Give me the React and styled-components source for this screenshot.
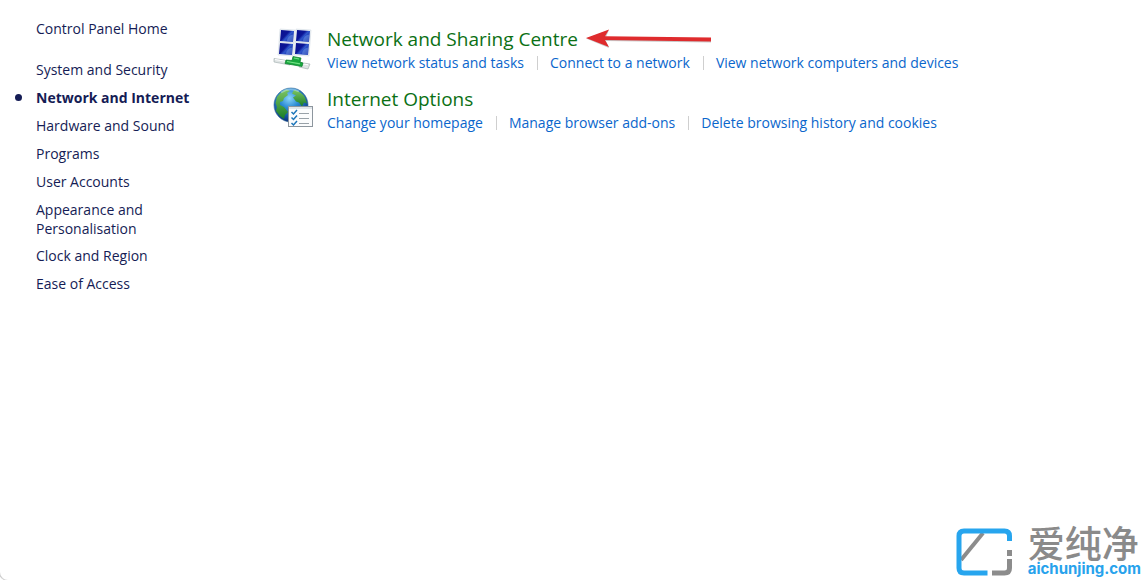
import React from "react";
import styled, { createGlobalStyle } from "styled-components";

const GlobalStyle = createGlobalStyle`
  * { box-sizing: border-box; }
  body {
    margin: 0;
    background: #fff;
    font-family: "Segoe UI", "Open Sans", "Noto Sans", sans-serif;
    font-size: 14px;
    line-height: 20px;
    color: #151c55;
  }
`;

const Page = styled.div`
  position: relative;
  display: flex;
  align-items: flex-start;
  min-height: 100vh;
  overflow: hidden;
`;

const Sidebar = styled.nav`
  flex: none;
  width: 272px;
  padding: 19px 72px 24px 36px;
`;

const NavList = styled.ul`
  list-style: none;
  margin: 21px 0 0;
  padding: 0;
  display: flex;
  flex-direction: column;
  gap: 8px;
`;

const NavItem = styled.li`
  position: relative;
  line-height: ${(p) => (p.$wraps ? "19px" : "20px")};
`;

const Bullet = styled.span`
  position: absolute;
  left: -21px;
  top: 6px;
  width: 7px;
  height: 7px;
  border-radius: 50%;
  background: #151c55;
`;

const NavLink = styled.a`
  display: block;
  color: inherit;
  text-decoration: none;
  font-weight: ${(p) => (p.$current ? 700 : 400)};
  &:hover { text-decoration: underline; }
`;

const Main = styled.main`
  flex: 1;
  min-width: 0;
  padding: 26px 16px 24px 0;
  display: flex;
  flex-direction: column;
  gap: 12px;
`;

const Category = styled.section`
  display: flex;
  gap: 13px;
`;

const IconBox = styled.div`
  flex: none;
  width: 42px;
  height: 46px;
  svg { display: block; }
`;

const TitleRow = styled.div`
  display: flex;
  align-items: center;
  gap: 8px;
  height: 26px;
`;

const Title = styled.h2`
  margin: 0;
  font-size: 19px;
  line-height: 26px;
  font-weight: 400;
  a { color: #0b7014; text-decoration: none; }
`;

const Tasks = styled.ul`
  list-style: none;
  margin: 0;
  padding: 0;
  display: flex;
  flex-wrap: wrap;
  min-height: 22px;
`;

const Task = styled.li`
  display: flex;
  align-items: center;
  white-space: nowrap;
  & + &::before {
    content: "";
    width: 1px;
    height: 14px;
    margin: 0 12px 0 13px;
    background: #cfcfcf;
  }
  a { color: #0a66cc; text-decoration: none; }
  a:hover { text-decoration: underline; }
`;

const Corner = styled.div`
  position: absolute;
  left: -1px;
  bottom: -1px;
  width: 9px;
  height: 9px;
  border: 1px solid #cfcfcf;
  border-width: 0 0 1px 1px;
  border-bottom-left-radius: 9px;
`;

const Watermark = styled.div`
  position: absolute;
  right: 3px;
  bottom: 4px;
  display: flex;
  align-items: flex-end;
  gap: 15px;
`;

const Brand = styled.div`
  display: flex;
  flex-direction: column;
  gap: 2px;
`;

const BrandName = styled.span`
  font: 500 37px/36px "Noto Sans CJK SC", sans-serif;
  color: #8a8a8a;
`;

const BrandUrl = styled.span`
  font: 700 15px/14px Inter, sans-serif;
  color: #27a2ec;
`;

const screens = [[8, 3], [24, 3], [7, 16], [23, 16]];

function NetworkIcon() {
  return (
    <svg width="42" height="46" viewBox="0 0 42 46" aria-hidden="true">
      <defs>
        <linearGradient id="screen" x1="0" y1="0" x2="1" y2=".8">
          <stop offset="0" stopColor="#0a1190" />
          <stop offset="0.45" stopColor="#0b1596" />
          <stop offset="0.6" stopColor="#2f57cc" />
          <stop offset="1" stopColor="#0e1c9a" />
        </linearGradient>
      </defs>
      {screens.map(([x, y]) => (
        <g key={`${x}-${y}`}>
          <path d={`M${x} ${y}l15 1-1 13-15-1z`} fill="#eef2f6" stroke="#cdd6df" strokeWidth=".5" />
          <path d={`M${x + 1} ${y + 1}l13 1-1 11-13-1z`} fill="url(#screen)" />
          <path d={`M${x + 7} ${y + 12.4}q0-6 6.500-7l-.6 7.500z`} fill="#7ba6ee" opacity=".45" />
        </g>
      ))}
      <path d="M2 32.500l16 2.500v4L2 36z" fill="#dfe4e4" stroke="#9caaaa" strokeWidth=".6" />
      <path d="M28 36.500l10 1.500-2 5-9-2z" fill="#dfe4e4" stroke="#9caaaa" strokeWidth=".6" />
      <path d="M3 33.500l14 2.300M29 37.700l7 1" stroke="#fff" />
      <path d="M14 34l6 .5 1-4 8 1.500-1 4 3 1-1 3.500-17-3z" fill="#18a83e" stroke="#0a7c29" strokeWidth=".7" />
      <path d="M15 35.500l13 2.300M22 32l5 1" stroke="#72e184" strokeWidth="1.200" />
    </svg>
  );
}

function InternetIcon() {
  return (
    <svg width="42" height="46" viewBox="0 0 42 46" aria-hidden="true">
      <defs>
        <radialGradient id="sea" cx=".45" cy=".3" r=".72">
          <stop offset="0" stopColor="#8bd6fa" />
          <stop offset=".4" stopColor="#2b8ad4" />
          <stop offset="1" stopColor="#082a78" />
        </radialGradient>
        <linearGradient id="land" x1="0" y1="0" x2="0" y2="1">
          <stop offset="0" stopColor="#7cc563" />
          <stop offset="1" stopColor="#187c26" />
        </linearGradient>
      </defs>
      <circle cx="19" cy="19" r="17" fill="url(#sea)" stroke="#326993" strokeWidth=".6" />
      <path d="M5 11q4-6 10-7.500l3 1.500-3 2 1 2-4 3-1 3-3 1 0 3 4 2 4 5-3 3-1 4q-5-3-8-8l1-4-1.500-4z" fill="url(#land)" />
      <path d="M22 4q7 1 11 7.500l2 6-3-1-2 4-3-4-3-1-3-4 3-2-4-2z" fill="url(#land)" />
      <path d="M9 6.500q9-6 18-1" fill="none" stroke="#e6faff" strokeWidth="2" opacity=".4" />
      <rect x="16.500" y="20.500" width="24" height="20" fill="#fbfcfd" stroke="#8d969e" />
      <path d="M17 22h23" stroke="#e1e6ea" strokeWidth="2" />
      <path d="M19.500 26l2 2 3.500-4M19.500 31.500l2 2 3.500-4M19.500 37l2 2 3.500-4" fill="none" stroke="#1d76ba" strokeWidth="1.500" />
      <path d="M27 27.500h10M27 32.500h10M27 37.500h10" stroke="#98a1a8" />
    </svg>
  );
}

function Arrow() {
  return (
    <svg width="125" height="20" viewBox="0 0 125 20" aria-hidden="true">
      <path d="M0 9.500L23 1l-3 7 105 1.500v4L20 12l3 7z" fill="#777" opacity=".4" />
      <path d="M0 9L23 0.500l-4 6.700 106 1.300v4L19 11l4 7z" fill="#df2b2d" />
    </svg>
  );
}

function BrandMark() {
  return (
    <svg width="57" height="48" viewBox="0 0 57 48" aria-hidden="true">
      <path d="M5 32L27 5" stroke="#8c8c8c" strokeWidth="4" />
      <path d="M53.500 13V8q0-5-5-5H8Q3 3 3 8v32q0 5 5 5h23.500" fill="none" stroke="#27a5ee" strokeWidth="5" />
      <path d="M53.500 22v6M53.500 31v9q0 5-5 5H36" fill="none" stroke="#8c8c8c" strokeWidth="5" />
    </svg>
  );
}

const navItems = [
  { label: "System and Security" },
  { label: "Network and Internet", current: true },
  { label: "Hardware and Sound" },
  { label: "Programs" },
  { label: "User Accounts" },
  { label: "Appearance and Personalisation", wraps: true },
  { label: "Clock and Region" },
  { label: "Ease of Access" },
];

const categories = [
  {
    title: "Network and Sharing Centre",
    icon: <NetworkIcon />,
    marked: true,
    tasks: ["View network status and tasks", "Connect to a network", "View network computers and devices"],
  },
  {
    title: "Internet Options",
    icon: <InternetIcon />,
    tasks: ["Change your homepage", "Manage browser add-ons", "Delete browsing history and cookies"],
  },
];

export default function App() {
  return (
    <>
      <GlobalStyle />
      <Page>
        <Sidebar>
          <NavLink href="#home">Control Panel Home</NavLink>
          <NavList>
            {navItems.map(({ label, current, wraps }) => (
              <NavItem key={label} $wraps={wraps}>
                {current && <Bullet />}
                <NavLink href="#category" $current={current} aria-current={current ? "page" : undefined}>
                  {label}
                </NavLink>
              </NavItem>
            ))}
          </NavList>
        </Sidebar>
        <Main>
          {categories.map((c) => (
            <Category key={c.title}>
              <IconBox>{c.icon}</IconBox>
              <div>
                <TitleRow>
                  <Title><a href="#open">{c.title}</a></Title>
                  {c.marked && <Arrow />}
                </TitleRow>
                <Tasks>
                  {c.tasks.map((t) => (
                    <Task key={t}><a href="#task">{t}</a></Task>
                  ))}
                </Tasks>
              </div>
            </Category>
          ))}
        </Main>
        <Corner />
        <Watermark>
          <BrandMark />
          <Brand>
            <BrandName lang="zh-CN">爱纯净</BrandName>
            <BrandUrl>aichunjing.com</BrandUrl>
          </Brand>
        </Watermark>
      </Page>
    </>
  );
}
